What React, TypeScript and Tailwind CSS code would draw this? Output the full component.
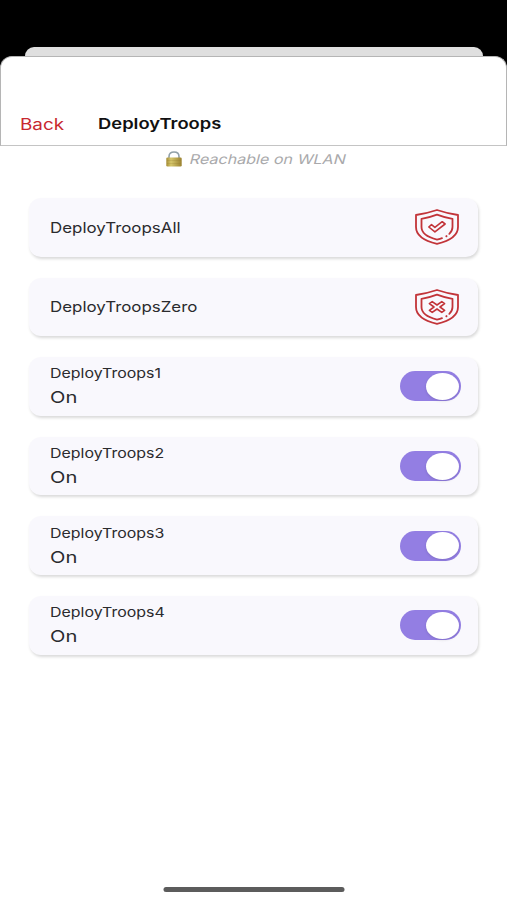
import { useState } from "react"
import type { ReactNode } from "react"

const troops = ["DeployTroops1", "DeployTroops2", "DeployTroops3", "DeployTroops4"]

function Shield({ children }: { children: ReactNode }) {
  return (
    <svg
      width="44"
      height="36"
      viewBox="0 0 44 36"
      fill="none"
      stroke="#c23439"
      strokeWidth="1.8"
      strokeLinecap="round"
      strokeLinejoin="round"
    >
      <path d="M22 1C15.500 3.200 8.500 4.900 1 6V18C1 27 10 32 22 34.800 34 32 43 27 43 18V6C35.500 4.900 28.500 3.200 22 1Z" />
      <path d="M27 29.200c-1.600.6-3.300 1-5 1.400C12.500 28.200 6.500 24.500 6.500 18V9.800C12 9 17.200 7.600 22 5.700c4.800 1.900 10 3.300 15.500 4.100V18c0 2.800-1.200 5-3.200 6.900" />
      <path d="M31.400 27.200l.1-.1" strokeWidth="2" />
      {children}
    </svg>
  )
}

function CheckShield() {
  return (
    <Shield>
      <path d="M13.800 18l2.700-2.300 3.400 2.700 7.300-5.700 2.900 2.300-10.200 7.900Z" strokeWidth="1.600" />
    </Shield>
  )
}

function CrossShield() {
  return (
    <Shield>
      <path
        d="M17.200 12.600 22 16 26.800 12.600 29.600 14.600 25 18 29.600 21.400 26.800 23.400 22 20 17.200 23.400 14.400 21.400 19 18 14.400 14.600Z"
        strokeWidth="1.600"
      />
    </Shield>
  )
}

function Lock() {
  return (
    <svg width="16" height="16" viewBox="0 0 16 16" fill="none">
      <defs>
        <linearGradient id="brass" x1="0" x2="1">
          <stop offset="0" stopColor="#a58c35" />
          <stop offset=".3" stopColor="#d5c66b" />
          <stop offset="1" stopColor="#9b8230" />
        </linearGradient>
      </defs>
      <path d="M3 9V5.500C3 2.500 5 1 8 1s5 1.500 5 4.500V9" stroke="#91a0a8" strokeWidth="1.600" />
      <rect x=".3" y="6.600" width="15.400" height="8.800" rx="1.200" fill="url(#brass)" />
      <path d="M1 9.500h14M1 12.500h14" stroke="#8c7429" strokeWidth=".5" opacity=".4" />
    </svg>
  )
}

function Card({ children }: { children: ReactNode }) {
  return (
    <div className="flex h-[58.600px] items-center justify-between rounded-[12px] bg-[#f9f8fd] pl-[20.500px] pr-[18px] shadow-[1px_2px_3px_rgba(0,0,0,0.15)]">
      {children}
    </div>
  )
}

function TroopRow({ name }: { name: string }) {
  const [on, setOn] = useState(true)

  return (
    <Card>
      <div className="flex flex-col text-[#2b2b2e]">
        <span className="origin-left scale-x-[1.180] text-[13.500px] leading-[22px]">{name}</span>
        <span className="origin-left scale-x-[1.220] text-[16.500px] leading-[26px]">{on ? "On" : "Off"}</span>
      </div>
      <button
        role="switch"
        aria-checked={on}
        aria-label={name}
        onClick={() => setOn(!on)}
        className={`-mr-px flex h-[30px] w-[61px] items-center rounded-full px-[2px] ${
          on ? "justify-end bg-[#937ee3]" : "justify-start bg-[#d9d9de]"
        }`}
      >
        <span className="h-[27px] w-[33px] rounded-[50%] bg-white shadow-[0_1px_3px_rgba(0,0,0,0.12)]" />
      </button>
    </Card>
  )
}

export default function App() {
  return (
    <div className="flex h-[900px] w-[507px] flex-col bg-white font-['Inter',sans-serif]">
      <div className="bg-black pt-[47px]">
        {/* Edge of the screen behind the sheet */}
        <div className="ml-[25px] mr-[24px] h-[9px] rounded-t-[9px] bg-[#dfdfdf]" />
        <header className="flex h-[90px] items-end rounded-t-[12px] border border-[#b5b5b5] border-b-[#c4c4c4] bg-white pb-[9px] pl-[19px]">
          <button className="w-[78px] text-left text-[16px] leading-6 text-[#c8282f]">
            <span className="inline-block origin-left scale-x-[1.180]">Back</span>
          </button>
          <h1 className="origin-left scale-x-[1.225] text-[15px] font-semibold leading-6 text-[#111]">DeployTroops</h1>
        </header>
      </div>

      <div className="flex h-[26px] items-center pl-[165.500px]">
        <Lock />
        <span className="ml-[8px] origin-left scale-x-[1.193] -skew-x-12 text-[13.500px] text-[#a9a9ab]">
          Reachable on WLAN
        </span>
      </div>

      <main className="mt-[26px] flex flex-col gap-[21px] pl-[29px] pr-[29px]">
        <Card>
          <span className="origin-left scale-x-[1.165] pt-px text-[14.500px] text-[#2b2b2e]">DeployTroopsAll</span>
          <button aria-label="Deploy all" className="mr-px">
            <CheckShield />
          </button>
        </Card>
        <Card>
          <span className="origin-left scale-x-[1.165] text-[14.500px] text-[#2b2b2e]">DeployTroopsZero</span>
          <button aria-label="Deploy zero" className="mr-px">
            <CrossShield />
          </button>
        </Card>
        {troops.map((name) => (
          <TroopRow key={name} name={name} />
        ))}
      </main>

      {/* Home indicator */}
      <div className="mx-auto mb-[8px] mt-auto h-[5px] w-[181px] translate-x-[0.500px] rounded-full bg-[#5c5c5c]" />
    </div>
  )
}
